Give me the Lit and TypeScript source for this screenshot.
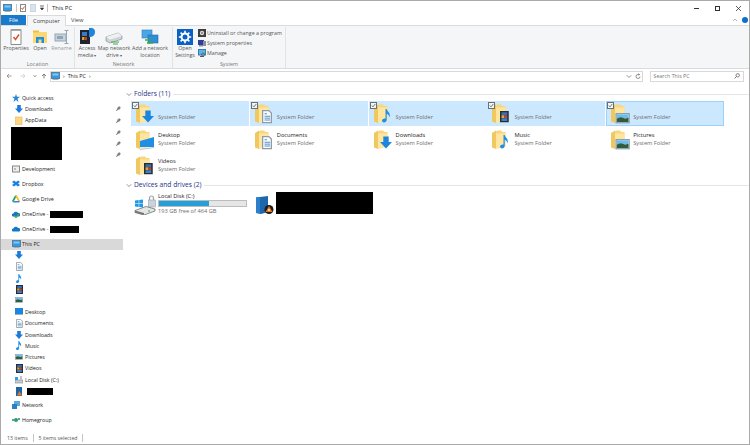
import { LitElement, html, css, svg, nothing } from "lit";
import { customElement } from "lit/decorators.js";

const icon = (w: number, h: number, body: unknown) =>
  html`<svg class="ico" width=${w} height=${h} viewBox="0 0 ${w} ${h}">${body}</svg>`;

const pc = svg`<rect x="0.5" y="0.5" width="8" height="6" fill="#2f9be8" stroke="#5d7d99"/><rect x="1.500" y="1.500" width="6" height="2" fill="#7cc7f5"/><rect x="1.500" y="7" width="6" height="1" fill="#9bb0c0"/>`;
const arrowDown = (x = 0, y = 0, s = 1, c = "#1b7bd6") =>
  svg`<path transform="translate(${x} ${y}) scale(${s})" d="M2.200 0h3.600v3.600h2.200L4 8 0 3.600h2.200z" fill=${c}/>`;
const noteShape = (x = 0, y = 0, s = 1) =>
  svg`<path transform="translate(${x} ${y}) scale(${s})" d="M2.600 0h.9c.2 1.600 2.300 2.400 2.300 4.600 0 .7-.2 1.200-.5 1.600.1-1.400-.8-2.200-1.800-2.700V8c0 1.200-1 2-2.100 2C.7 10 0 9.400 0 8.600c0-1 1-1.800 2.600-1.600z" fill="#1f8fe6"/>`;
const filmShape = (x = 0, y = 0, s = 1) =>
  svg`<g transform="translate(${x} ${y}) scale(${s})"><rect width="7" height="9" fill="#2e2e2e"/><rect x="1.200" y="1" width="4.600" height="2.200" fill="#2f6fc4"/><rect x="1.200" y="3.400" width="2.300" height="2.200" fill="#e0a82a"/><rect x="3.500" y="3.400" width="2.300" height="2.200" fill="#c2452d"/><rect x="1.200" y="5.800" width="4.600" height="2.200" fill="#3a80d0"/></g>`;
const picShape = (x = 0, y = 0, s = 1) =>
  svg`<g transform="translate(${x} ${y}) scale(${s})"><rect x=".5" y=".5" width="10" height="7" fill="#fff" stroke="#8da0ae"/><rect x="1" y="1" width="9" height="3" fill="#6dbcec"/><path d="M1 7V4.200l3-1 3.500 1L10 3.600V7z" fill="#2f5d3c"/></g>`;
const docShape = (x = 0, y = 0, s = 1) =>
  svg`<g transform="translate(${x} ${y}) scale(${s})"><path d="M.5.5h5l2 2v7.500h-7z" fill="#fdfdfd" stroke="#8f9ba6"/><path d="M2 3h2M2 5h4.500M2 6.500h4.500M2 8h4.500" stroke="#4d93c9" stroke-width=".8"/></g>`;

const folder = (overlay: unknown) =>
  icon(
    20,
    20,
    svg`<path d="M3 2.500 5 .5H9L10.500 2H13.500V15H3z" fill="#f8d67f"/><path d="M0 3 4 .5V19L0 17.500z" fill="#f0c860"/><path d="M4 3.500H13.500V17L4 19z" fill="#fee5a0"/>${overlay}`
  );

const folders = {
  downloads: arrowDown(6, 6.5, 1.5, "#1b86e0"),
  documents: docShape(7, 6, 1.25),
  music: noteShape(8, 5, 1.35),
  videos: filmShape(8, 7, 1.25),
  pictures: picShape(4.500, 9, 1.3),
  desktop: svg`<path d="M4 11 18 7v10H4z" fill="#1f8fe6"/><path d="M4 19 18 17v1L4 20z" fill="#b7c4cf"/>`,
};

const small = {
  star: icon(8, 8, svg`<path d="M4 0 5 2.800H8L5.600 4.700 6.500 8 4 6 1.500 8 2.400 4.700 0 2.800H3z" fill="#2b88d8"/>`),
  down: icon(8, 8, arrowDown()),
  folder: icon(8, 9, svg`<rect y="1" width="7" height="8" fill="#fbd784" stroke="#e3b655" stroke-width=".6"/>`),
  dev: icon(8, 8, svg`<rect x=".5" y="1" width="7" height="6" fill="#eee" stroke="#888"/><circle cx="3" cy="4" r="1" fill="#aaa"/>`),
  dropbox: icon(8, 8, svg`<path d="M2 .5 4 2 6 .5 8 2 6 3.500 8 5 6 6.500 4 5 2 6.500 0 5 2 3.500 0 2z" fill="#1a82e2"/>`),
  gdrive: icon(8, 8, svg`<path d="M3 .5h2L2 6 1 7.500 0 6z" fill="#1ea362"/><path d="M3 .5h2l3 5.500H6z" fill="#f7c21c"/><path d="M2 6h6L7 7.500H1z" fill="#3f7fe8"/>`),
  cloudSync: icon(8, 8, svg`<path d="M1 6.500a1.500 1.500 0 0 1 .4-3A2.500 2.500 0 0 1 6 3a1.800 1.800 0 0 1 1 3.500z" fill="#1577c9"/><path d="M2 5.500 4 7.500 7 4" stroke="#3cb043" stroke-width="1.300" fill="none"/>`),
  cloud: icon(8, 8, svg`<path d="M1 6.500a1.500 1.500 0 0 1 .4-3A2.500 2.500 0 0 1 6 3a1.800 1.800 0 0 1 1 3.500z" fill="#1577c9"/>`),
  pc: icon(9, 8, pc),
  doc: icon(7, 9, docShape(0, 0, 0.85)),
  note: icon(6, 9, noteShape(0, 0, 0.9)),
  film: icon(7, 9, filmShape(0, 0, 1)),
  pic: icon(8, 7, picShape(0, 0, 0.72)),
  desktop: icon(8, 7, svg`<rect width="8" height="6" fill="#1b86e0"/><rect y="6" width="8" height="1" fill="#9bb0c0"/>`),
  disk: icon(8, 8, svg`<rect x="0" y="4" width="8" height="3" fill="#c9ced2" stroke="#6d7880" stroke-width=".5"/><rect x="0" y="1" width="3" height="3" fill="#29a0e6"/><rect x="5" y="0" width="2" height="4" fill="#b9c2c9"/>`),
  share: icon(8, 9, svg`<rect x="1" y="0" width="6" height="9" fill="#1e65a8"/><path d="M2 8.500 4.500 4 7 8.500z" fill="#e8781e"/>`),
  network: icon(8, 8, svg`<rect x="2" y="0" width="6" height="5" fill="#5aa8e0"/><rect x="0" y="3" width="5" height="5" fill="#2b7fc2"/>`),
  home: icon(8, 6, svg`<circle cx="1" cy="3" r="1" fill="#1c78c8"/><circle cx="4" cy="3" r="2" fill="#2e9e4f"/><circle cx="7" cy="2" r="1" fill="#1c78c8"/>`),
};

const pin = icon(5, 5, svg`<path d="M3 0 5 2 4 2.500 3 4 2.500 3.500 .5 5 0 4.500 1.500 2.500 1 2 2.500 1z" fill="#7d7d7d"/>`);
const chevronDown = icon(6, 5, svg`<path d="M.8 1.300 3 3.500 5.200 1.300" fill="none" stroke="#777" stroke-width=".8"/>`);
const check = icon(7, 7, svg`<rect x=".5" y=".5" width="6" height="6" fill="#eef6fc" stroke="#6e6e6e"/><path d="M1.800 3.500 3 4.800 5.300 2" fill="none" stroke="#555" stroke-width=".8"/>`);

const ribbonIcons = {
  properties: icon(16, 16, svg`<path d="M3 .5h10v15H3z" fill="#fff" stroke="#8b8b8b"/><path d="M3 .5h10v1.500H3z" fill="#a8a8a8"/><path d="M5.500 8 7.500 10.500 11 5.500" fill="none" stroke="#e0532a" stroke-width="1.500"/>`),
  open: icon(16, 16, svg`<rect x="1" y="3" width="14" height="11" fill="#fcd873"/><rect x="1" y="1.500" width="6" height="2" fill="#f2bd46"/><rect x="4" y="8" width="8" height="6" fill="#1f8fe0"/><rect x="6.500" y="10.500" width="3" height="3.500" fill="#fcd873"/>`),
  rename: icon(16, 16, svg`<rect x="1" y="5" width="11" height="7" fill="#c5d3df" stroke="#98a6b2"/><rect x="3" y="7" width="6" height="3" fill="#8fa4b6"/><path d="M12.500 2v12M10.500 1.500h4M10.500 14.500h4" stroke="#98a6b2"/>`),
  media: icon(17, 17, svg`<rect x="1" y="2" width="10" height="14" fill="#20242c"/><rect x="3" y="4" width="5" height="4" fill="#3c78c8"/><rect x="3" y="9" width="2.500" height="3" fill="#d9a22a"/><rect x="5.500" y="9" width="2.500" height="3" fill="#b8432c"/><path d="M10 0h3a4 4 0 0 1 3 4c0 3-2 5-6 5z" fill="#1f86dc"/>`),
  mapDrive: icon(18, 16, svg`<path d="M1 8 13 4l4 3v3L5 14 1 12z" fill="#cdd3d7" stroke="#7a858c" stroke-width=".6"/><path d="M1 8 13 4l4 3L5 10.500z" fill="#eef0f2"/><path d="M6 13h8M8 15h5" stroke="#4aa84a" stroke-width="1.200"/>`),
  addNet: icon(18, 16, svg`<rect x="1" y="1" width="10" height="8" fill="#4aa6e6" stroke="#2d7fbd" stroke-width=".6"/><rect x="7" y="6" width="10" height="8" fill="#2f8ed6" stroke="#226da6" stroke-width=".6"/><path d="M4 11h6M6 14h6" stroke="#3da94a" stroke-width="1.300"/>`),
  settings: icon(16, 16, svg`<rect width="16" height="16" fill="#0a63c4"/><circle cx="8" cy="8" r="3.500" fill="none" stroke="#fff" stroke-width="2"/><path d="M8 1.800v2.400M8 11.800v2.400M1.800 8h2.400M11.800 8h2.400M3.600 3.600l1.700 1.700M10.700 10.700l1.700 1.700M3.600 12.400l1.700-1.700M10.700 5.300l1.700-1.700" stroke="#fff" stroke-width="1.600"/>`),
  uninstall: icon(8, 8, svg`<rect width="8" height="8" fill="#3d3d3d"/><circle cx="4" cy="4" r="2.200" fill="#d8d8d8"/><circle cx="4" cy="4" r=".8" fill="#3d3d3d"/>`),
  system: icon(8, 8, svg`<rect y="1" width="6" height="5" fill="#2a3f9e"/><rect x="5" y="2" width="3" height="5" fill="#8b8fa0"/><rect x="1" y="6" width="4" height="1.500" fill="#8b8fa0"/>`),
  manage: icon(8, 8, svg`<rect x=".5" y=".5" width="7" height="5.500" fill="#5cb3ea" stroke="#3b7ba8"/><path d="M2 7.500h4" stroke="#555"/><circle cx="5" cy="5.500" r="1.500" fill="none" stroke="#555" stroke-width=".7"/>`),
};

const nav = [
  { lvl: 1, i: small.star, t: "Quick access" },
  { lvl: 2, i: small.down, t: "Downloads", pin: true },
  { lvl: 2, i: small.folder, t: "AppData", pin: true },
  { blocked: true },
  { lvl: 1, gap: 1, i: small.dev, t: "Development" },
  { lvl: 1, gap: 1, i: small.dropbox, t: "Dropbox" },
  { lvl: 1, gap: 1, i: small.gdrive, t: "Google Drive" },
  { lvl: 1, gap: 1, i: small.cloudSync, t: "OneDrive -", hide: 33 },
  { lvl: 1, gap: 1, i: small.cloud, t: "OneDrive -", hide: 29 },
  { lvl: 1, gap: 1, i: small.pc, t: "This PC", sel: true },
  { lvl: 2, i: small.down, t: "" },
  { lvl: 2, i: small.doc, t: "" },
  { lvl: 2, i: small.note, t: "" },
  { lvl: 2, i: small.film, t: "" },
  { lvl: 2, i: small.pic, t: "" },
  { lvl: 2, i: small.desktop, t: "Desktop" },
  { lvl: 2, i: small.doc, t: "Documents" },
  { lvl: 2, i: small.down, t: "Downloads" },
  { lvl: 2, i: small.note, t: "Music" },
  { lvl: 2, i: small.pic, t: "Pictures" },
  { lvl: 2, i: small.film, t: "Videos" },
  { lvl: 2, i: small.disk, t: "Local Disk (C:)" },
  { lvl: 2, i: small.share, t: "", hide: 26 },
  { lvl: 1, gap: 2, i: small.network, t: "Network" },
  { lvl: 1, gap: 1, i: small.home, t: "Homegroup" },
];

const tiles = [
  { o: folders.downloads, sel: true },
  { o: folders.documents, sel: true },
  { o: folders.music, sel: true },
  { o: folders.videos, sel: true },
  { o: folders.pictures, sel: true, last: true },
  { o: folders.desktop, n: "Desktop" },
  { o: folders.documents, n: "Documents" },
  { o: folders.downloads, n: "Downloads" },
  { o: folders.music, n: "Music" },
  { o: folders.pictures, n: "Pictures" },
  { o: folders.videos, n: "Videos" },
];

@customElement("app-root")
export class AppRoot extends LitElement {
  static styles = css`
    :host {
      display: flex;
      flex-direction: column;
      box-sizing: border-box;
      width: 750px;
      height: 445px;
      border: 1px solid #aaa;
      background: #fff;
      overflow: hidden;
      font-family: "Open Sans", sans-serif;
      font-size: 5.7px;
      line-height: 8px;
      color: #222;
    }
    .ico {
      display: block;
      flex: none;
    }
    .title {
      display: flex;
      align-items: center;
      height: 14px;
      padding-left: 2px;
      flex: none;
    }
    .qa {
      display: flex;
      align-items: center;
      gap: 3.7px;
    }
    .bar {
      width: 1px;
      height: 8px;
      background: #c4c4c4;
    }
    .title-text {
      margin-left: 3.5px;
      font-size: 6px;
    }
    .winbtns {
      margin-left: auto;
      margin-right: 7.5px;
      display: flex;
      gap: 14px;
    }
    .tabs {
      display: flex;
      align-items: stretch;
      height: 11px;
      box-sizing: border-box;
      flex: none;
      border-bottom: 1px solid #dadbdc;
    }
    .tab {
      padding: 0 5px;
      display: flex;
      align-items: center;
      color: #444;
    }
    .tab.file {
      background: #1979ca;
      color: #fff;
      width: 25px;
      box-sizing: border-box;
      justify-content: center;
      padding: 0;
    }
    .tab.on {
      width: 39px;
      height: 11px;
      box-sizing: border-box;
      justify-content: center;
      padding: 0;
      background: #f5f6f7;
      border: 1px solid #dadbdc;
      border-bottom: 0;
      margin-left: 1px;
    }
    .tab-right {
      margin-left: auto;
      margin-right: 1px;
      display: flex;
      align-items: center;
      gap: 4px;
    }
    .help {
      width: 6px;
      height: 6px;
      border-radius: 50%;
      background: #0a6fd0;
    }
    .ribbon {
      display: flex;
      height: 43px;
      box-sizing: border-box;
      flex: none;
      background: #f5f6f7;
      border-bottom: 1px solid #dadbdc;
      color: #555;
    }
    .group {
      display: flex;
      flex-direction: column;
      border-right: 1px solid #e2e3e4;
      margin: 1px 0 0;
      box-sizing: border-box;
    }
    .group-body {
      flex: 1;
      display: flex;
    }
    .group-label {
      text-align: center;
      color: #777;
      font-size: 5.4px;
      line-height: 7px;
    }
    .rbtn {
      display: flex;
      flex-direction: column;
      align-items: center;
      text-align: center;
      line-height: 6.6px;
      font-size: 5.3px;
      padding-top: 1.5px;
      white-space: nowrap;
    }
    .rbtn .ico {
      margin-bottom: 0.5px;
    }
    .rbtn.faded {
      color: #9a9a9a;
    }
    .rbtn.media .ico {
      margin-top: -1px;
    }
    .stack {
      display: flex;
      flex-direction: column;
      gap: 2px;
      padding: 1.5px 0 0 1px;
      font-size: 5.3px;
      white-space: nowrap;
    }
    .stack div {
      display: flex;
      gap: 1px;
      align-items: center;
    }
    .caret::after {
      content: "▾";
      font-size: 4px;
      margin-left: 1px;
    }
    .addr {
      display: flex;
      align-items: center;
      height: 16px;
      flex: none;
      padding-bottom: 2px;
      box-sizing: border-box;
      font-size: 5.4px;
    }
    .navbtns {
      display: grid;
      grid-template-columns: 14px 14px 9px 10px;
      justify-items: center;
      align-items: center;
      width: 49px;
      padding-left: 1px;
      box-sizing: border-box;
      flex: none;
    }
    .addrbox {
      width: 593px;
      height: 11px;
      box-sizing: border-box;
      border: 1px solid #d9d9d9;
      display: flex;
      align-items: center;
      gap: 3px;
      flex: none;
    }
    .addrbox .end {
      margin-left: auto;
      display: flex;
      align-items: center;
      gap: 3px;
      margin-right: 1px;
    }
    .search {
      margin-left: 6.5px;
      width: 94px;
      height: 11px;
      box-sizing: border-box;
      border: 1px solid #d9d9d9;
      display: flex;
      align-items: center;
      justify-content: space-between;
      padding: 0 3px;
      color: #777;
      font-size: 5.3px;
      flex: none;
    }
    .body {
      flex: 1;
      display: flex;
      min-height: 0;
    }
    .side {
      width: 122px;
      flex: none;
      padding-top: 7px;
      box-sizing: border-box;
      font-size: 5.3px;
    }
    .row {
      display: flex;
      align-items: center;
      height: 11.3px;
      gap: 2px;
      padding-right: 2px;
      white-space: nowrap;
    }
    .row.l1 {
      padding-left: 11px;
    }
    .row.l2 {
      padding-left: 14px;
    }
    .slot {
      display: flex;
      justify-content: center;
      flex: none;
      width: 8px;
    }
    .row.g1 {
      margin-top: 3.7px;
    }
    .row.g2 {
      margin-top: 3px;
    }
    .row.sel {
      background: #d9d9d9;
    }
    .row .pin {
      margin-left: auto;
    }
    .hide {
      background: #000;
      height: 7px;
      flex: none;
    }
    .blocked {
      height: 33.5px;
      margin: 1px 0 -0.5px;
      display: flex;
      justify-content: space-between;
      padding: 0 2px 0 10px;
    }
    .blocked .black {
      width: 51px;
      background: #000;
    }
    .pins {
      display: flex;
      flex-direction: column;
      justify-content: space-around;
    }
    .main {
      flex: 1;
      padding: 4px 0 0 3px;
      min-width: 0;
    }
    .head {
      display: flex;
      align-items: center;
      height: 10px;
      gap: 2px;
      color: #1e3287;
      font-size: 6.7px;
    }
    .head::after {
      content: "";
      flex: 1;
      height: 1px;
      background: #e5e5e5;
      margin-left: 1px;
    }
    .grid {
      display: grid;
      grid-template-columns: repeat(5, 118px);
      column-gap: 0.8px;
      row-gap: 1px;
      padding: 2px 0 0 5px;
      margin-bottom: 2px;
    }
    .tile {
      position: relative;
      height: 25px;
      display: flex;
      align-items: center;
      gap: 2px;
      padding-left: 4px;
      box-sizing: border-box;
      border: 1px solid transparent;
    }
    .tile.sel {
      background: #cce8ff;
      border-color: #cce8ff;
    }
    .tile.last {
      border-color: #99d1ff;
    }
    .tile-text {
      padding-bottom: 1px;
    }
    .check {
      position: absolute;
      left: 0;
      top: 0;
    }
    .name {
      color: #222;
      min-height: 8px;
    }
    .sub {
      color: #6d6d6d;
    }
    .drives {
      display: flex;
      padding: 2px 0 0 8px;
    }
    .drive {
      display: flex;
      align-items: center;
      gap: 2px;
      height: 25px;
      width: 114px;
      flex: none;
    }
    .drive-text {
      width: 89px;
      padding-bottom: 2px;
    }
    .meter {
      height: 7px;
      background: #e6e6e6;
      border: 1px solid #bcbcbc;
      box-sizing: border-box;
    }
    .fill {
      height: 100%;
      background: #26a0da;
    }
    .net {
      display: flex;
      align-items: flex-start;
      gap: 2px;
      padding-left: 8px;
    }
    .net .ico {
      margin-top: 4px;
    }
    .net .black {
      width: 97px;
      height: 22px;
      background: #000;
    }
    .status {
      height: 12px;
      display: flex;
      align-items: center;
      gap: 4.5px;
      padding-left: 6px;
      flex: none;
      color: #555;
      font-size: 5.2px;
    }
    .count {
      min-width: 21.5px;
    }
  `;

  private renderNavRow(r: (typeof nav)[number]) {
    if (r.blocked) {
      return html`<div class="blocked">
        <div class="black"></div>
        <div class="pins">${pin}${pin}${pin}</div>
      </div>`;
    }
    const cls = `row l${r.lvl} ${r.gap ? `g${r.gap}` : ""} ${r.sel ? "sel" : ""}`;
    return html`<div class=${cls}>
      <span class="slot">${r.i}</span><span>${r.t}</span>
      ${r.hide ? html`<span class="hide" style="width:${r.hide}px"></span>` : nothing}
      ${r.pin ? html`<span class="pin">${pin}</span>` : nothing}
    </div>`;
  }

  render() {
    return html`
      <div class="title">
        <div class="qa">
          ${icon(9, 8, pc)}
          <span class="bar"></span>
          ${icon(6, 8, svg`<rect x=".5" y=".5" width="5" height="7" fill="#fff" stroke="#888"/><path d="M1.500 4 2.500 5.500 4.500 2.500" stroke="#e0532a" fill="none"/>`)}
          ${icon(6, 8, svg`<rect width="6" height="8" fill="#d8e3ef" stroke="#aab8c6" stroke-width=".5"/>`)}
          ${icon(4, 6, svg`<path d="M0 1h4M.5 3h3L2 5z" stroke="#333" stroke-width=".7" fill="#333"/>`)}
          <span class="bar"></span>
        </div>
        <span class="title-text">This PC</span>
        <div class="winbtns">
          ${icon(7, 7, svg`<path d="M1 3.500h5" stroke="#333"/>`)}
          ${icon(7, 7, svg`<rect x="1.500" y="1.500" width="4" height="4" fill="none" stroke="#333"/>`)}
          ${icon(7, 7, svg`<path d="M1 1l5 5M6 1 1 6" stroke="#333" stroke-width=".8"/>`)}
        </div>
      </div>
      <div class="tabs">
        <div class="tab file">File</div>
        <div class="tab on">Computer</div>
        <div class="tab">View</div>
        <div class="tab-right">
          ${icon(6, 4, svg`<path d="M1 3 3 1 5 3" fill="none" stroke="#999" stroke-width=".7"/>`)}
          <span class="help"></span>
        </div>
      </div>
      <div class="ribbon">
        <div class="group" style="width:74px">
          <div class="group-body">
            <div class="rbtn" style="width:30px">${ribbonIcons.properties}Properties</div>
            <div class="rbtn" style="width:18px">${ribbonIcons.open}Open</div>
            <div class="rbtn faded" style="width:25px">${ribbonIcons.rename}Rename</div>
          </div>
          <div class="group-label">Location</div>
        </div>
        <div class="group" style="width:98px">
          <div class="group-body">
            <div class="rbtn media" style="width:24px">${ribbonIcons.media}Access<br /><span class="caret">media</span></div>
            <div class="rbtn" style="width:30px">${ribbonIcons.mapDrive}Map network<br /><span class="caret">drive</span></div>
            <div class="rbtn" style="width:42px">${ribbonIcons.addNet}Add a network<br />location</div>
          </div>
          <div class="group-label">Network</div>
        </div>
        <div class="group" style="width:113px">
          <div class="group-body">
            <div class="rbtn" style="width:24px">${ribbonIcons.settings}Open<br />Settings</div>
            <div class="stack">
              <div>${ribbonIcons.uninstall}Uninstall or change a program</div>
              <div>${ribbonIcons.system}System properties</div>
              <div>${ribbonIcons.manage}Manage</div>
            </div>
          </div>
          <div class="group-label">System</div>
        </div>
      </div>
      <div class="addr">
        <div class="navbtns">
          ${icon(6, 6, svg`<path d="M5.500 3H1M3 1 1 3l2 2" fill="none" stroke="#888" stroke-width=".8"/>`)}
          ${icon(6, 6, svg`<path d="M.5 3H5M3 1l2 2-2 2" fill="none" stroke="#ccc" stroke-width=".8"/>`)}
          ${icon(4, 4, svg`<path d="M.5 1 2 3 3.500 1" fill="none" stroke="#888" stroke-width=".7"/>`)}
          ${icon(6, 6, svg`<path d="M3 5.500V1M1 3l2-2 2 2" fill="none" stroke="#666" stroke-width=".8"/>`)}
        </div>
        <div class="addrbox">
          ${icon(9, 8, pc)}
          <span>›</span><span>This PC</span><span>›</span>
          <div class="end">
            ${chevronDown}
            ${icon(6, 7, svg`<path d="M5 3.500A2 2 0 1 1 3 1.500H4.500M3.500 .5 4.500 1.500 3.500 2.500" fill="none" stroke="#666" stroke-width=".7"/>`)}
          </div>
        </div>
        <div class="search">
          <span>Search This PC</span>
          ${icon(6, 6, svg`<circle cx="3.700" cy="2.300" r="1.700" fill="none" stroke="#555" stroke-width=".7"/><path d="M2.500 3.500.5 5.500" stroke="#555" stroke-width=".8"/>`)}
        </div>
      </div>
      <div class="body">
        <div class="side">${nav.map((r) => this.renderNavRow(r))}</div>
        <div class="main">
          <div class="head">${chevronDown}Folders (11)</div>
          <div class="grid">
            ${tiles.map(
              (t) => html`<div class="tile ${t.sel ? "sel" : ""} ${t.last ? "last" : ""}">
                ${t.sel ? html`<span class="check">${check}</span>` : nothing}
                ${folder(t.o)}
                <div class="tile-text">
                  <div class="name">${t.n ?? ""}</div>
                  <div class="sub">System Folder</div>
                </div>
              </div>`
            )}
          </div>
          <div class="head">${chevronDown}Devices and drives (2)</div>
          <div class="drives">
            <div class="drive">
              ${icon(22, 20, svg`<rect x="14.500" y="5" width="7" height="7" fill="#c9d3da" stroke="#8b969e" stroke-width=".5"/><path d="M15.500 5V3a2 2 0 0 1 4 0v2" fill="none" stroke="#9aa4ab" stroke-width="1.200"/><path d="M1 5.500 4.700 5v3.200H1zM5.200 5l3.800-.5v3.700H5.200zM1 8.700h3.700v3.200L1 11.500zM5.200 8.700H9v3.700l-3.800-.5z" fill="#1e9be6"/><path d="M1 15.500 12 11.500l9 2.500v2L10 20 1 17.500z" fill="#e4e6e8" stroke="#444" stroke-width=".6"/><path d="M1 15.500 10 18v2L1 17.500z" fill="#777"/><rect x="14" y="15.500" width="2" height="1" fill="#3cb043"/>`)}
              <div class="drive-text">
                <div class="name">Local Disk (C:)</div>
                <div class="meter"><div class="fill" style="width:57%"></div></div>
                <div class="sub">193 GB free of 464 GB</div>
              </div>
            </div>
            <div class="net">
              ${icon(18, 18, svg`<path d="M0 1.500 12 0v16L5 18 0 17z" fill="#1f67ad"/><path d="M0 1.500 4 1v16.500L0 17z" fill="#2c7fc9"/><circle cx="13" cy="13.500" r="4.500" fill="#1c1c1c"/><path d="M13 10 16.500 16h-7z" fill="#e8781e"/><circle cx="13" cy="14" r=".9" fill="#fff"/>`)}
              <div class="black"></div>
            </div>
          </div>
        </div>
      </div>
      <div class="status">
        <span class="count">13 items</span><span class="bar"></span><span>5 items selected</span><span class="bar"></span>
      </div>
    `;
  }
}

declare global {
  interface HTMLElementTagNameMap {
    "app-root": AppRoot;
  }
}
